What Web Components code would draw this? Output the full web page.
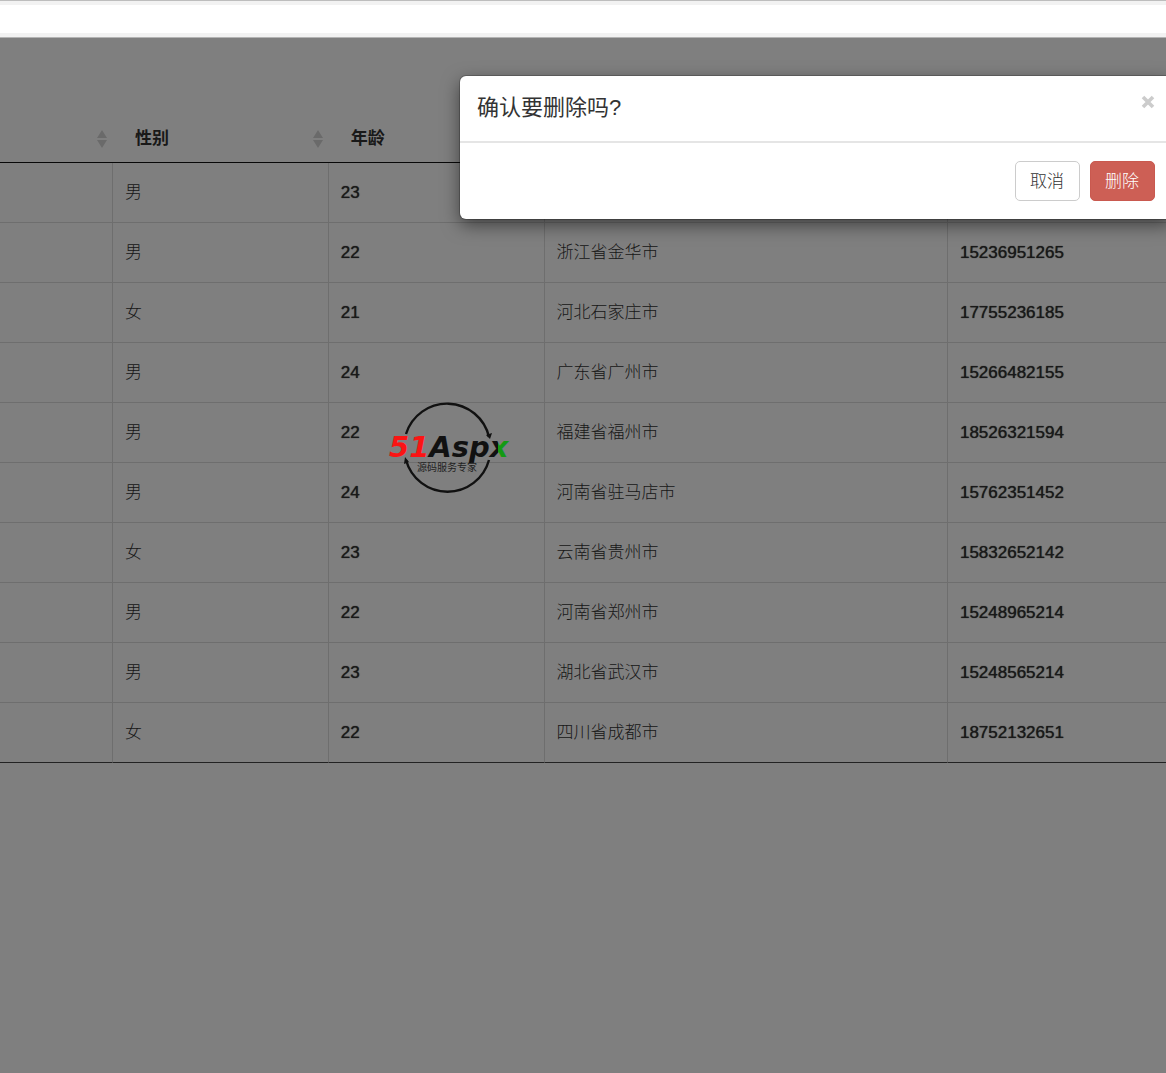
<!DOCTYPE html>
<html lang="zh-CN">
<head>
<meta charset="utf-8">
<title>会员列表</title>
<style>
    html, body {
        height: 100%;
        margin: 0;
    }
    body {
        display: flex;
        flex-direction: column;
        overflow: hidden;
        background: #fff;
        color: #333;
        font: 17px/24px "Liberation Sans", "Noto Sans CJK SC", sans-serif;
    }
</style>
</head>
<body>
<top-bar></top-bar>
<page-view>
    <member-table></member-table>
    <confirm-dialog slot="dialog">
        <span slot="title">确认要删除吗?</span>
        <action-button slot="actions">取消</action-button>
        <action-button slot="actions" kind="danger">删除</action-button>
    </confirm-dialog>
    <site-mark slot="mark"></site-mark>
</page-view>

<script>
class TopBar extends HTMLElement {
    constructor() {
        super();
        this.attachShadow({ mode: 'open' }).innerHTML = `
            <style>
            :host {
                display: block;
                flex: none;
                border-top: 1px solid #bdbdbd;
                border-bottom: 1px solid #b4b4b4;
                background: #f2f2f2;
                padding: 4px 0;
            }
            div {
                height: 28px;
                background: #fff;
            }
            </style>
            <div></div>
        `;
    }
}

class PageView extends HTMLElement {
    constructor() {
        super();
        this.attachShadow({ mode: 'open' }).innerHTML = `
            <style>
            :host {
                display: block;
                flex: 1;
                position: relative;
                overflow: hidden;
            }
            .content {
                padding-top: 76px;
            }
            .backdrop {
                position: absolute;
                inset: 0;
                background: rgba(0, 0, 0, .5);
            }
            ::slotted([slot="dialog"]) {
                position: absolute;
                top: 38px;
                left: 460px;
                right: -6px;
            }
            ::slotted([slot="mark"]) {
                position: absolute;
                top: 362px;
                left: 384px;
            }
            </style>
            <div class="content"><slot></slot></div>
            <div class="backdrop"></div>
            <slot name="mark"></slot>
            <slot name="dialog"></slot>
        `;
    }
}

const members = [
    ['', '男', '23', '', ''],
    ['', '男', '22', '浙江省金华市', '15236951265'],
    ['', '女', '21', '河北石家庄市', '17755236185'],
    ['', '男', '24', '广东省广州市', '15266482155'],
    ['', '男', '22', '福建省福州市', '18526321594'],
    ['', '男', '24', '河南省驻马店市', '15762351452'],
    ['', '女', '23', '云南省贵州市', '15832652142'],
    ['', '男', '22', '河南省郑州市', '15248965214'],
    ['', '男', '23', '湖北省武汉市', '15248565214'],
    ['', '女', '22', '四川省成都市', '18752132651']
];

class MemberTable extends HTMLElement {
    constructor() {
        super();
        const heads = ['', '性别', '年龄', '', ''];
        const sort = `<svg width="10" height="18" viewBox="0 0 10 18"><path d="M5 0l5 8H0zM5 18l5-8H0z" fill="#d4d4d4"/></svg>`;

        this.attachShadow({ mode: 'open' }).innerHTML = `
            <style>
            :host {
                display: block;
            }
            table {
                width: 100%;
                table-layout: fixed;
                border-collapse: separate;
                border-spacing: 0;
            }
            th {
                box-sizing: border-box;
                height: 49px;
                padding: 2px 6px 0 22px;
                border-bottom: 1px solid #111;
                text-align: left;
            }
            th div {
                display: flex;
                align-items: center;
                justify-content: space-between;
            }
            svg {
                margin-left: auto;
            }
            td {
                box-sizing: border-box;
                height: 60px;
                padding: 0 12px;
                border-right: 1px solid #ddd;
                border-bottom: 1px solid #ddd;
                font-weight: 300;
            }
            td.num {
                font-weight: 400;
                text-shadow: 0 0 1px #333;
            }
            td:last-child {
                border-right: 0;
            }
            tr:last-child td {
                border-bottom-color: #444;
            }
            .name { width: 9.7%; }
            .sex, .age { width: 18.5%; }
            .city { width: 34.6%; }
            </style>
            <table>
                <colgroup><col class="name"><col class="sex"><col class="age"><col class="city"><col></colgroup>
                <thead>
                    <tr>${heads.map(h => `<th scope="col"><div>${h}${sort}</div></th>`).join('')}</tr>
                </thead>
                <tbody>
                    ${members.map(row => `<tr>${row.map((cell, i) =>
                        `<td${i === 2 || i === 4 ? ' class="num"' : ''}>${cell}</td>`).join('')}</tr>`).join('')}
                </tbody>
            </table>
        `;
    }
}

class ConfirmDialog extends HTMLElement {
    constructor() {
        super();
        this.attachShadow({ mode: 'open' }).innerHTML = `
            <style>
            :host {
                display: block;
                border-radius: 6px;
                background: #fff;
                box-shadow: 0 0 0 1px rgba(0, 0, 0, .2), 0 6px 18px rgba(0, 0, 0, .5);
            }
            header {
                display: flex;
                align-items: flex-start;
                justify-content: space-between;
                padding: 16px 17px 17px;
                border-bottom: 2px solid #e5e5e5;
            }
            h4 {
                margin: 0;
                font-size: 22px;
                font-weight: 400;
                line-height: 32px;
            }
            .close {
                display: flex;
                margin: 0;
                padding: 3px 0;
                border: 0;
                background: none;
                cursor: pointer;
            }
            footer {
                display: flex;
                justify-content: flex-end;
                gap: 10px;
                padding: 18px 17px;
            }
            </style>
            <section role="dialog" aria-labelledby="title">
                <header>
                    <h4 id="title"><slot name="title"></slot></h4>
                    <button class="close" type="button" aria-label="关闭">
                        <svg width="14" height="14" viewBox="0 0 14 14"><path d="M2 2l10 10M12 2L2 12" stroke="#ccc" stroke-width="3.6"/></svg>
                    </button>
                </header>
                <footer><slot name="actions"></slot></footer>
            </section>
        `;
    }
}

class ActionButton extends HTMLElement {
    constructor() {
        super();
        this.attachShadow({ mode: 'open' }).innerHTML = `
            <style>
            :host {
                display: block;
            }
            button {
                display: block;
                height: 40px;
                padding: 2px 15px 0 14px;
                border: 1px solid #ccc;
                border-radius: 5px;
                background: #fff;
                color: #333;
                font: inherit;
                font-weight: 300;
                cursor: pointer;
            }
            :host([kind="danger"]) button {
                border-color: #c9594f;
                background: #cd5f55;
                color: #fff;
            }
            </style>
            <button type="button"><slot></slot></button>
        `;
    }
}

class SiteMark extends HTMLElement {
    constructor() {
        super();
        this.attachShadow({ mode: 'open' }).innerHTML = `
            <style>
            :host {
                display: block;
            }
            svg {
                display: block;
            }
            .word {
                font: italic bold 29px "DejaVu Sans", sans-serif;
            }
            .sub {
                font: 10px "Noto Sans CJK SC", sans-serif;
            }
            </style>
            <svg width="130" height="96" viewBox="0 0 130 96">
                <defs>
                    <linearGradient id="arm" gradientUnits="userSpaceOnUse" x1="102" y1="0" x2="126" y2="0">
                        <stop offset=".5" stop-color="#111"/>
                        <stop offset=".5" stop-color="#149a14"/>
                    </linearGradient>
                </defs>
                <g fill="none" stroke="#111" stroke-width="2.4">
                    <path d="M22 34A43 43 0 0 1 105 37"/>
                    <path d="M105 60A43 43 0 0 1 22 60"/>
                </g>
                <path d="M102 35l6-2-2 6zM20 64l1-7 4 5z" fill="#111"/>
                <text class="word" x="5" y="57" fill="#fb1414">51<tspan fill="#111">Asp</tspan><tspan fill="url(#arm)">x</tspan></text>
                <text class="sub" x="33" y="71" fill="#222">源码服务专家</text>
            </svg>
        `;
    }
}

customElements.define('top-bar', TopBar);
customElements.define('page-view', PageView);
customElements.define('member-table', MemberTable);
customElements.define('confirm-dialog', ConfirmDialog);
customElements.define('action-button', ActionButton);
customElements.define('site-mark', SiteMark);
</script>
</body>
</html>
